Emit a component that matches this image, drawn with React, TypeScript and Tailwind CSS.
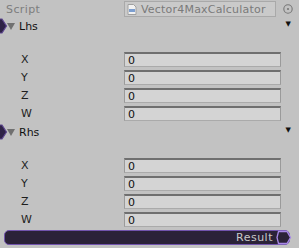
import React from "react";

type Port = { className?: string };

function PortIn({ className }: Port) {
  return (
    <svg width="8" height="16" viewBox="0 0 8 16" className={className}>
      <path d="M-4 1 L2 1 L6.5 8 L2 15 L-4 15 Z" fill="#2f2347" stroke="#5e4790" strokeWidth="1.2" />
    </svg>
  );
}

function FieldRow({ label }: { label: string }) {
  return (
    <div className="flex items-center h-[15px] mb-[3px]">
      <div className="w-[124px] pl-[21px] text-[#1e1e1e]">{label}</div>
      <div className="w-[157px] h-[15px] bg-[#d4d4d4] border-t-2 border-[#6f6f6f] border-x border-b border-x-[#9a9a9a] border-b-[#aaaaaa] flex items-center pl-[3px] text-[#111]">
        0
      </div>
    </div>
  );
}

function Section({ title }: { title: string }) {
  return (
    <div>
      <div className="relative flex items-center h-[16px]">
        <PortIn className="absolute left-0 top-0" />
        <svg width="8" height="7" viewBox="0 0 8 7" className="ml-[7px]">
          <path d="M0 0 H8 L4 7 Z" fill="#707070" />
        </svg>
        <span className="ml-[4px] text-[#111]">{title}</span>
        <span className="ml-auto mr-[8px] -mt-[4px] text-[#111] text-[7px] leading-none">▼</span>
      </div>
      <div className="h-[18px]" />
      <FieldRow label="X" />
      <FieldRow label="Y" />
      <FieldRow label="Z" />
      <FieldRow label="W" />
    </div>
  );
}

export default function App() {
  return (
    <div className="w-[299px] h-[248px] bg-[#c2c2c2] overflow-hidden font-['DejaVu_Sans',sans-serif] text-[11px] leading-none">
      {/* script field */}
      <div className="flex items-center h-[17px] pt-[1px]">
        <div className="w-[124px] pl-[6px] text-[#7d7d7d] tracking-[0.4px]">Script</div>
        <div className="w-[152px] h-[16px] bg-[#cacaca] border border-[#a9a9a9] flex items-center pl-[2px] text-[#7a7a7a] tracking-[0.2px]">
          <svg width="10" height="11" viewBox="0 0 10 11" className="mr-[4px]">
            <path d="M1 0.5 H6.5 L9 3 V10.5 H1 Z" fill="#f2f2f2" stroke="#a0a0a0" strokeWidth="1" />
            <rect x="2" y="5" width="6" height="3" fill="#7d9fd0" />
          </svg>
          Vector4MaxCalculator
        </div>
        <svg width="12" height="12" viewBox="0 0 12 12" className="ml-[6px]">
          <circle cx="6" cy="6" r="4.2" fill="none" stroke="#777" strokeWidth="1.1" />
          <circle cx="6" cy="6" r="1.1" fill="#777" />
        </svg>
      </div>

      <div className="mt-[1px]">
        <Section title="Lhs" />
      </div>
      <Section title="Rhs" />

      {/* output bar */}
      <div className="relative mx-[4px] mt-[1px] w-[286px] h-[15px] rounded-[5px] bg-[#2b2238] border border-[#7254ad] flex items-center justify-end pr-[16px]">
        <span className="text-[#c9c9c9] tracking-[0.5px]">Result</span>
        <svg width="16" height="15" viewBox="0 0 16 15" className="absolute -right-[3px] -top-[1px]">
          <path d="M2.5 1.5 H11 L14.5 7.5 L11 13.5 H2.5 L1 7.5 Z" fill="#2b2238" stroke="#a889e6" strokeWidth="1.3" />
        </svg>
      </div>
    </div>
  );
}
